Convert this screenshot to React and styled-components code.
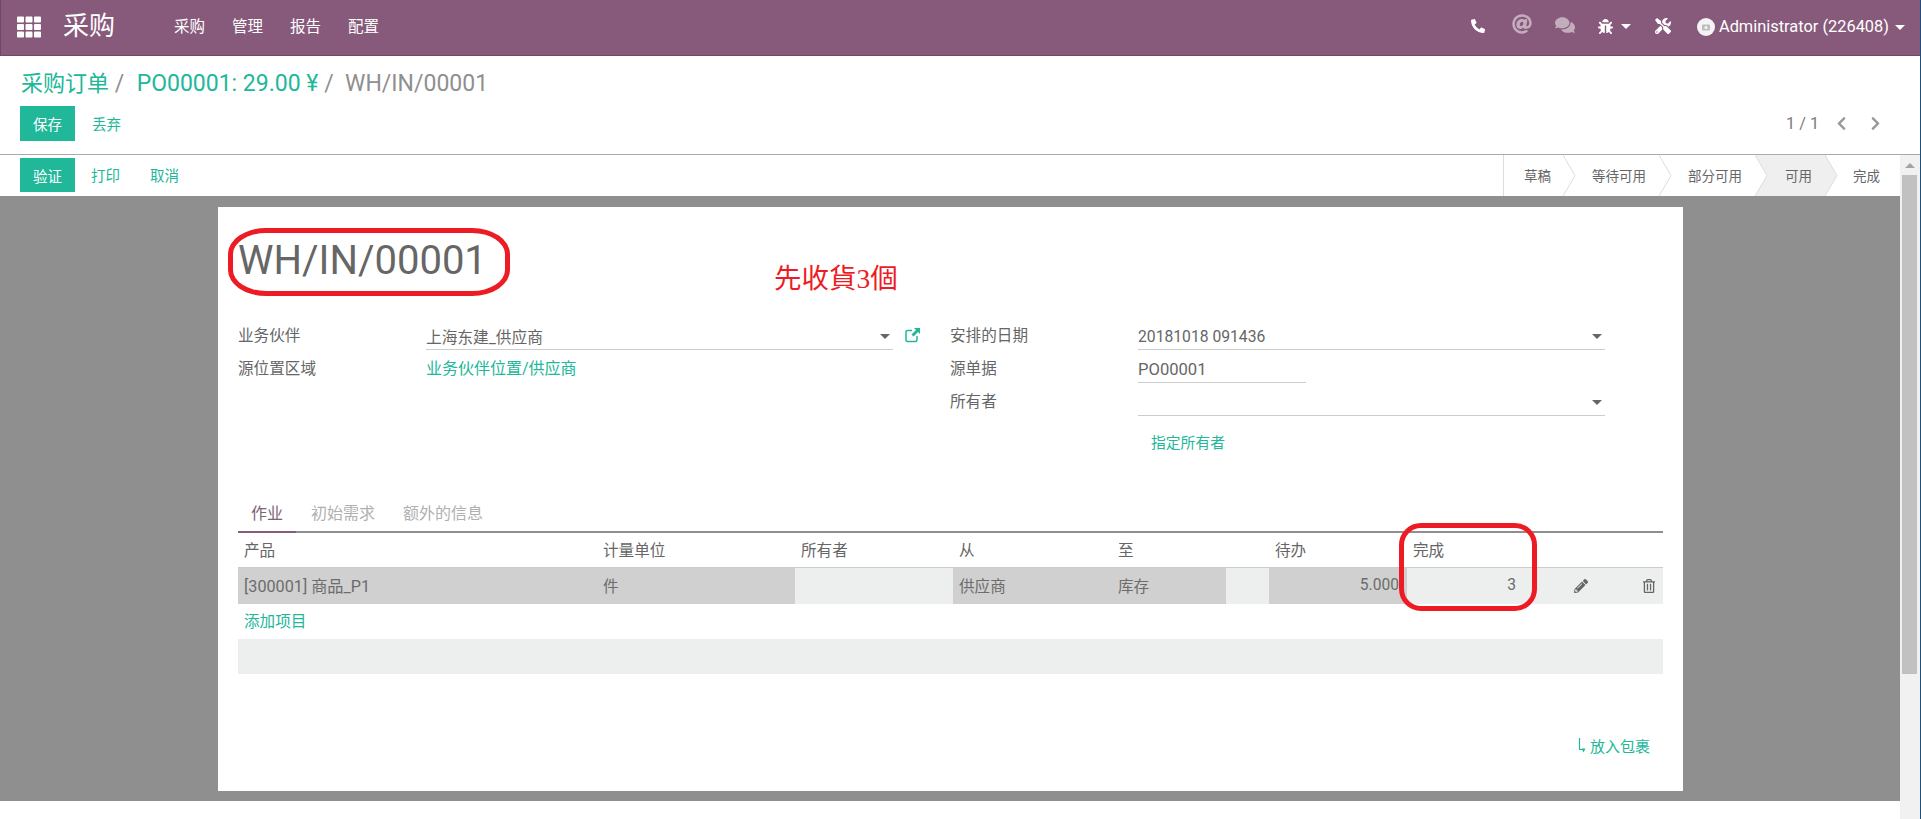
import React from "react";
import styled, { createGlobalStyle } from "styled-components";
import {
  FaAt,
  FaBug,
  FaChevronLeft,
  FaChevronRight,
  FaComments,
  FaPencilAlt,
  FaPhoneAlt,
  FaRegTrashAlt,
  FaTh,
  FaTools,
} from "react-icons/fa";

const GlobalStyle = createGlobalStyle`
  html, body {
    margin: 0;
    height: 100%;
    overflow: hidden;
    background: #fff;
  }
  body {
    font-family: Roboto, "Noto Sans CJK SC", sans-serif;
    font-size: 15.6px;
    color: #666;
  }
  * {
    box-sizing: border-box;
  }
`;

const TEAL = "#21b799";
const COLUMNS = "359px 198px 158px 159px 114px 43px 138px 115px 98px 43px";

const Frame = styled.div`
  display: flex;
  height: 100vh;
  min-height: 819px;
`;

const Page = styled.div`
  flex: 1;
  min-width: 0;
  display: flex;
  flex-direction: column;
`;

const WindowEdge = styled.div`
  width: 1px;
  background: #1d4f7c;
`;

const Navbar = styled.header`
  height: 56px;
  display: flex;
  align-items: center;
  padding: 0 15px 1px 16px;
  background: #875a7b;
  border-left: 1px solid #6c4a63;
  border-bottom: 1px solid #6c4a63;
  color: #fff;
`;

const Brand = styled.div`
  margin: 0 46px 3px 22px;
  font-size: 26px;
  line-height: 1;
`;

const MenuItem = styled.span`
  padding: 0 13px 4px;
  font-size: 15.5px;
  margin-right: 1px;
`;

const NavRight = styled.div`
  margin-left: auto;
  display: flex;
  align-items: center;
`;

const NavIcon = styled.span`
  width: ${(p) => p.$width}px;
  display: flex;
  align-items: center;
  justify-content: center;
  gap: 8px;
  padding-bottom: ${(p) => p.$lift || 2}px;
  font-size: ${(p) => p.$size || 15}px;
  opacity: ${(p) => (p.$muted ? 0.5 : 1)};
`;

const Caret = styled.i`
  display: inline-block;
  width: 0;
  height: 0;
  border-left: 5px solid transparent;
  border-right: 5px solid transparent;
  border-top: 5px solid ${(p) => p.$color || "#fff"};
`;

const UserMenu = styled.div`
  display: flex;
  align-items: center;
  margin-left: 12px;
  font-size: 16.4px;
  gap: 6px;
`;

const UserName = styled.span`
  margin-left: -2px;
  padding-bottom: 2px;
`;

const ControlPanel = styled.section`
  height: 99px;
  padding: 13px 28px 0 20px;
  border-bottom: 1px solid #aaa;
`;

const Breadcrumb = styled.div`
  height: 30px;
  padding-left: 1px;
  font-size: 23px;
  line-height: 30px;
  color: #8f8f8f;
  white-space: pre;
`;

const Crumb = styled.span`
  margin-left: ${(p) => p.$shift || 0}px;
  color: ${(p) => (p.$current ? "#8f8f8f" : TEAL)};
  font-size: ${(p) => p.$size || 23}px;
`;

const ButtonRow = styled.div`
  display: flex;
  align-items: center;
  justify-content: space-between;
  margin-top: 7px;
`;

const Buttons = styled.div`
  display: flex;
  align-items: center;
`;

const PrimaryButton = styled.button`
  width: 55px;
  height: ${(p) => p.$height}px;
  padding: 0;
  border: 0;
  background: ${TEAL};
  color: #fff;
  font: inherit;
  font-size: 14.5px;
`;

const LinkButton = styled.button`
  margin-left: 3px;
  padding: 0 14px;
  border: 0;
  background: none;
  color: ${TEAL};
  font: inherit;
  font-size: 14.5px;
`;

const Pager = styled.div`
  display: flex;
  align-items: center;
  color: #7c7c7c;
  font-size: 16.2px;
`;

const PagerArrow = styled.span`
  display: flex;
  width: 34px;
  justify-content: center;
  color: #999;
  font-size: 15px;
`;

const PagerCount = styled.span`
  margin-right: 5px;
`;

const Workspace = styled.div`
  flex: 1;
  min-height: 0;
  display: flex;
`;

const Main = styled.main`
  flex: 1;
  min-width: 0;
  display: flex;
  flex-direction: column;
`;

const StatusRow = styled.div`
  height: 41px;
  display: flex;
  justify-content: space-between;
  padding-left: 20px;
`;

const ActionButtons = styled(Buttons)`
  align-items: flex-start;
  padding-top: 3px;
  height: 100%;
`;

const ActionLink = styled(LinkButton)`
  height: 33px;
  margin-left: 2px;
`;

const Steps = styled.div`
  display: flex;
  border-left: 1px solid #ddd;
`;

const Step = styled.div`
  position: relative;
  display: flex;
  align-items: center;
  width: ${(p) => p.$width}px;
  padding: 0 0 2px ${(p) => p.$pad}px;
  font-size: 13.5px;
  color: #666;
  background: ${(p) => (p.$active ? "#efefef" : "#fff")};
`;

const StepArrow = styled.svg`
  position: absolute;
  left: 100%;
  top: 0;
  z-index: 1;
`;

const Backdrop = styled.div`
  height: 605px;
  padding: 11px 217px 0 218px;
  background: #8f8f8f;
`;

const Sheet = styled.article`
  position: relative;
  height: 584px;
  padding: 31px 20px 0;
  background: #fff;
`;

const Title = styled.h1`
  margin: 0;
  font-size: 40px;
  font-weight: 400;
  line-height: 46px;
  color: #666;
`;

const Ellipse = styled.div`
  position: absolute;
  left: 10px;
  top: 21px;
  width: 282px;
  height: 68px;
  border: 5px solid #ed1c24;
  border-radius: 38px / 26px;
`;

const Note = styled.div`
  position: absolute;
  left: 556px;
  top: 54px;
  font-family: "Liberation Serif", "Noto Sans CJK TC", serif;
  font-size: 27.5px;
  line-height: 36px;
  color: #ed1c24;
`;

const DoneMark = styled.div`
  position: absolute;
  left: 1181px;
  top: 316px;
  width: 138px;
  height: 88px;
  border: 5px solid #ed1c24;
  border-radius: 22px;
`;

const FormGrid = styled.div`
  display: grid;
  grid-template-columns: 712px 1fr;
  margin-top: 33px;
`;

const Field = styled.div`
  display: grid;
  grid-template-columns: 188px 467px;
  height: 33px;
`;

const FieldLabel = styled.label`
  display: flex;
  align-items: center;
  padding-top: 1px;
`;

const FieldValue = styled.div`
  position: relative;
  display: flex;
  align-items: center;
  justify-content: space-between;
  width: ${(p) => p.$width || 467}px;
  padding: ${(p) => (p.$plain ? "1px" : "6px")} 3px 0 0;
  font-size: ${(p) => p.$size || 15.7}px;
  border-bottom: ${(p) => (p.$plain ? "0" : "1.5px solid #ccc")};
  color: ${(p) => (p.$link ? TEAL : "#666")};
`;

const ExternalLink = styled.svg`
  position: absolute;
  left: 479px;
  top: 10px;
`;

const SetOwner = styled.div`
  margin: 17px 0 0 201px;
  height: 20px;
  line-height: 20px;
  font-size: 14.8px;
  color: ${TEAL};
`;

const Tabs = styled.nav`
  display: flex;
  height: 42px;
  margin-top: 38px;
  border-bottom: 2px solid #8f8f8f;
`;

const Tab = styled.span`
  height: 42px;
  margin-right: 2px;
  padding: 12px 13px 0;
  font-size: 16px;
  line-height: 22px;
  color: ${(p) => (p.$active ? "#7c6274" : "#b0b0b0")};
  border-bottom: 2px solid ${(p) => (p.$active ? "#875a7b" : "transparent")};
`;

const GridRow = styled.div`
  display: grid;
  grid-template-columns: ${COLUMNS};
`;

const HeadCell = styled.div`
  height: 35px;
  padding: 2px 6px 0;
  line-height: 33px;
  border-bottom: 1px solid #ccc;
`;

const Cell = styled.div`
  display: flex;
  align-items: center;
  justify-content: ${(p) => (p.$end ? "flex-end" : "flex-start")};
  height: 36px;
  padding: ${(p) => (p.$end ? `0 ${p.$inset || 8}px 2px 6px` : "0 6px 2px")};
  background: ${(p) => (p.$readonly ? "#d0d0d0" : "#edeeee")};
  color: #6c6c6c;
  font-size: ${(p) => p.$size || 15.6}px;
`;

const IconCell = styled(Cell)`
  justify-content: ${(p) => p.$align || "center"};
  padding: 0 ${(p) => p.$inset || 0}px 0 ${(p) => p.$offset || 0}px;
  font-size: 14px;
  color: #666;
`;

const AddLine = styled.div`
  height: 35px;
  padding: 1px 0 0 6px;
  line-height: 35px;
  color: ${TEAL};
`;

const Band = styled.div`
  height: 35px;
  background: #edeeee;
`;

const PackRow = styled.div`
  display: flex;
  align-items: center;
  justify-content: flex-end;
  gap: 3px;
  height: 20px;
  margin-top: 61px;
  padding-right: 13px;
  font-size: 15px;
  color: ${TEAL};
`;

const Scrollbar = styled.aside`
  width: 20px;
  padding: 0 3px 0 2px;
  background: #f1f1f1;
`;

const ScrollUp = styled.div`
  height: 20px;
  display: flex;
  align-items: center;
  justify-content: center;
`;

const ScrollThumb = styled.div`
  height: 499px;
  background: #c1c1c1;
`;

const Triangle = styled.i`
  width: 0;
  height: 0;
  border-left: 5px solid transparent;
  border-right: 5px solid transparent;
  border-bottom: 5px solid #a3a3a3;
`;

const steps = [
  { label: "草稿", width: 59, pad: 20 },
  { label: "等待可用", width: 96, pad: 29 },
  { label: "部分可用", width: 96, pad: 29 },
  { label: "可用", width: 70, pad: 30, active: true },
  { label: "完成", width: 75, pad: 28, last: true },
];

const heads = ["产品", "计量单位", "所有者", "从", "至", "", "待办", "完成", "", ""];

const CameraAvatar = () => (
  <svg width="18" height="18" viewBox="0 0 18 18">
    <circle cx="9" cy="9" r="9" fill="#f4f4f4" />
    <rect x="5" y="6.5" width="8" height="6" rx="1" fill="#bdbdbd" />
    <circle cx="9" cy="9.5" r="1.6" fill="#f4f4f4" />
  </svg>
);

const DropCaret = () => <Caret $color="#666" />;

const App = () => {
  return (
    <Frame>
      <GlobalStyle />
      <Page>
        <Navbar>
          <FaTh size={24} />
          <Brand>采购</Brand>
          <MenuItem>采购</MenuItem>
          <MenuItem>管理</MenuItem>
          <MenuItem>报告</MenuItem>
          <MenuItem>配置</MenuItem>
          <NavRight>
            <NavIcon $width={44} $size={14}>
              <FaPhoneAlt />
            </NavIcon>
            <NavIcon $width={44} $size={20} $muted $lift={6}>
              <FaAt />
            </NavIcon>
            <NavIcon $width={43} $size={20} $muted $lift={4}>
              <FaComments />
            </NavIcon>
            <NavIcon $width={55} $size={15}>
              <FaBug />
              <Caret />
            </NavIcon>
            <NavIcon $width={43} $size={16} $lift={3}>
              <FaTools />
            </NavIcon>
            <UserMenu>
              <CameraAvatar />
              <UserName>Administrator (226408)</UserName>
              <Caret />
            </UserMenu>
          </NavRight>
        </Navbar>

        <ControlPanel>
          <Breadcrumb>
            <Crumb $size={22}>采购订单</Crumb>
            {" /  "}
            <Crumb $shift={1}>PO00001: 29.00 ¥</Crumb>
            {" /  "}
            <Crumb $current>WH/IN/00001</Crumb>
          </Breadcrumb>
          <ButtonRow>
            <Buttons>
              <PrimaryButton $height={35}>保存</PrimaryButton>
              <LinkButton>丢弃</LinkButton>
            </Buttons>
            <Pager>
              <PagerCount>1 / 1</PagerCount>
              <PagerArrow>
                <FaChevronLeft />
              </PagerArrow>
              <PagerArrow>
                <FaChevronRight />
              </PagerArrow>
            </Pager>
          </ButtonRow>
        </ControlPanel>

        <Workspace>
          <Main>
            <StatusRow>
              <ActionButtons>
                <PrimaryButton $height={34}>验证</PrimaryButton>
                <ActionLink>打印</ActionLink>
                <ActionLink>取消</ActionLink>
              </ActionButtons>
              <Steps>
                {steps.map((step) => (
                  <Step
                    key={step.label}
                    $width={step.width}
                    $pad={step.pad}
                    $active={step.active}
                  >
                    {step.label}
                    {!step.last && (
                      <StepArrow width="13" height="41" viewBox="0 0 13 41">
                        <polyline
                          points="0,0 12,20.5 0,41"
                          fill={step.active ? "#efefef" : "#fff"}
                          stroke="#ddd"
                        />
                      </StepArrow>
                    )}
                  </Step>
                ))}
              </Steps>
            </StatusRow>

            <Backdrop>
              <Sheet>
                <Title>WH/IN/00001</Title>
                <Ellipse />
                <Note>先收貨3個</Note>
                <DoneMark />

                <FormGrid>
                  <div>
                    <Field>
                      <FieldLabel>业务伙伴</FieldLabel>
                      <FieldValue>
                        上海东建_供应商
                        <DropCaret />
                        <ExternalLink width="16" height="16" viewBox="0 0 16 16">
                          <path
                            d="M12 9v4a1.5 1.5 0 0 1-1.5 1.5h-8A1.5 1.5 0 0 1 1 13V5a1.5 1.5 0 0 1 1.5-1.5H7"
                            fill="none"
                            stroke={TEAL}
                            strokeWidth="1.5"
                          />
                          <path d="M9 1h6v6l-2-2-4.5 4.5-2-2L11 3z" fill={TEAL} />
                        </ExternalLink>
                      </FieldValue>
                    </Field>
                    <Field>
                      <FieldLabel>源位置区域</FieldLabel>
                      <FieldValue $plain $link $size={16}>
                        业务伙伴位置/供应商
                      </FieldValue>
                    </Field>
                  </div>
                  <div>
                    <Field>
                      <FieldLabel>安排的日期</FieldLabel>
                      <FieldValue>
                        20181018 091436
                        <DropCaret />
                      </FieldValue>
                    </Field>
                    <Field>
                      <FieldLabel>源单据</FieldLabel>
                      <FieldValue $width={168} $size={16.6}>
                        PO00001
                      </FieldValue>
                    </Field>
                    <Field>
                      <FieldLabel>所有者</FieldLabel>
                      <FieldValue>
                        <span />
                        <DropCaret />
                      </FieldValue>
                    </Field>
                    <SetOwner>指定所有者</SetOwner>
                  </div>
                </FormGrid>

                <Tabs>
                  <Tab $active>作业</Tab>
                  <Tab>初始需求</Tab>
                  <Tab>额外的信息</Tab>
                </Tabs>

                <GridRow>
                  {heads.map((head, index) => (
                    <HeadCell key={index}>{head}</HeadCell>
                  ))}
                </GridRow>
                <GridRow>
                  <Cell $readonly $size={16.2}>
                    [300001] 商品_P1
                  </Cell>
                  <Cell $readonly>件</Cell>
                  <Cell />
                  <Cell $readonly>供应商</Cell>
                  <Cell $readonly>库存</Cell>
                  <Cell />
                  <Cell $readonly $end>
                    5.000
                  </Cell>
                  <Cell $end $inset={6}>
                    3
                  </Cell>
                  <IconCell $offset={20}>
                    <FaPencilAlt />
                  </IconCell>
                  <IconCell $align="flex-end" $inset={7}>
                    <FaRegTrashAlt />
                  </IconCell>
                </GridRow>
                <AddLine>添加项目</AddLine>
                <Band />

                <PackRow>
                  <svg width="9" height="15" viewBox="0 0 9 15">
                    <path d="M1.5 0v11.5H5" fill="none" stroke={TEAL} strokeWidth="1.2" />
                    <path d="M3.5 10.5h4L5.5 14.5z" fill={TEAL} />
                  </svg>
                  放入包裹
                </PackRow>
              </Sheet>
            </Backdrop>
          </Main>
          <Scrollbar>
            <ScrollUp>
              <Triangle />
            </ScrollUp>
            <ScrollThumb />
          </Scrollbar>
        </Workspace>
      </Page>
      <WindowEdge />
    </Frame>
  );
};

export default App;
